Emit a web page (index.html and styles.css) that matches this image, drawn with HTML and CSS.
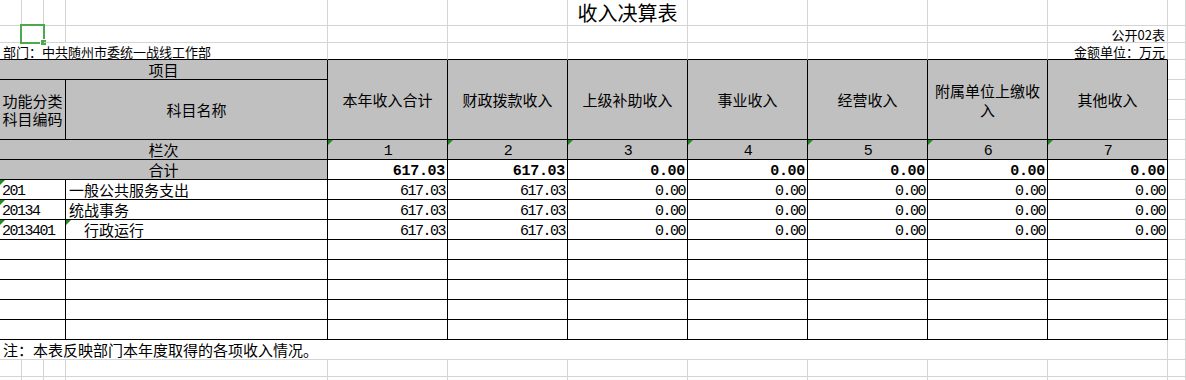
FILE: index.html
```html
<!DOCTYPE html>
<html lang="zh-CN">
<head>
<meta charset="utf-8">
<title>收入决算表</title>
<link rel="stylesheet" href="styles.css">
</head>
<body>
<div class="sheet">
  <!-- row 1 -->
  <div></div><div></div><div></div><div></div><div></div><div></div>
  <div class="title">收入决算表</div>
  <div></div><div></div><div></div><div></div><div></div>
  <!-- row 2 -->
  <div></div><div class="sel"></div><div></div><div></div><div></div><div></div><div></div><div></div><div></div><div></div>
  <div class="small right">公开02表</div>
  <div></div>
  <!-- row 3 -->
  <div class="small span4 bb">部门：中共随州市委统一战线工作部</div>
  <div class="bb"></div><div class="bb"></div><div class="bb"></div><div class="bb"></div><div class="bb"></div><div class="bb"></div>
  <div class="small right bb">金额单位：万元</div>
  <div></div>
  <!-- row 4 : header -->
  <div class="b h span4">项目</div>
  <div class="b h tall">本年收入合计</div>
  <div class="b h tall">财政拨款收入</div>
  <div class="b h tall">上级补助收入</div>
  <div class="b h tall">事业收入</div>
  <div class="b h tall">经营收入</div>
  <div class="b h tall">附属单位上缴收入</div>
  <div class="b h tall">其他收入</div>
  <div></div>
  <!-- rows 5-7 -->
  <div class="b h code-head">功能分类科目编码</div>
  <div class="b h name-head">科目名称</div>
  <div></div>
  <div></div>
  <div></div>
  <!-- row 8 : 栏次 -->
  <div class="b h span4">栏次</div>
  <div class="b h n tri">1</div>
  <div class="b h n tri">2</div>
  <div class="b h n tri">3</div>
  <div class="b h n tri">4</div>
  <div class="b h n tri">5</div>
  <div class="b h n tri">6</div>
  <div class="b h n tri">7</div>
  <div></div>
  <!-- row 9 : 合计 -->
  <div class="b h span4">合计</div>
  <div class="b n num strong">617.03</div>
  <div class="b n num strong">617.03</div>
  <div class="b n num strong">0.00</div>
  <div class="b n num strong">0.00</div>
  <div class="b n num strong">0.00</div>
  <div class="b n num strong">0.00</div>
  <div class="b n num strong">0.00</div>
  <div></div>
  <!-- row 10 -->
  <div class="b n code span3 tri">201</div>
  <div class="b name">一般公共服务支出</div>
  <div class="b n num">617.03</div>
  <div class="b n num">617.03</div>
  <div class="b n num">0.00</div>
  <div class="b n num">0.00</div>
  <div class="b n num">0.00</div>
  <div class="b n num">0.00</div>
  <div class="b n num">0.00</div>
  <div></div>
  <!-- row 11 -->
  <div class="b n code span3 tri">20134</div>
  <div class="b name">统战事务</div>
  <div class="b n num">617.03</div>
  <div class="b n num">617.03</div>
  <div class="b n num">0.00</div>
  <div class="b n num">0.00</div>
  <div class="b n num">0.00</div>
  <div class="b n num">0.00</div>
  <div class="b n num">0.00</div>
  <div></div>
  <!-- row 12 -->
  <div class="b n code span3 tri">2013401</div>
  <div class="b name indent tri">行政运行</div>
  <div class="b n num">617.03</div>
  <div class="b n num">617.03</div>
  <div class="b n num">0.00</div>
  <div class="b n num">0.00</div>
  <div class="b n num">0.00</div>
  <div class="b n num">0.00</div>
  <div class="b n num">0.00</div>
  <div></div>
  <!-- rows 13-17 : empty -->
  <div class="b span3"></div><div class="b"></div><div class="b"></div><div class="b"></div><div class="b"></div><div class="b"></div><div class="b"></div><div class="b"></div><div class="b"></div><div></div>
  <div class="b span3"></div><div class="b"></div><div class="b"></div><div class="b"></div><div class="b"></div><div class="b"></div><div class="b"></div><div class="b"></div><div class="b"></div><div></div>
  <div class="b span3"></div><div class="b"></div><div class="b"></div><div class="b"></div><div class="b"></div><div class="b"></div><div class="b"></div><div class="b"></div><div class="b"></div><div></div>
  <div class="b span3"></div><div class="b"></div><div class="b"></div><div class="b"></div><div class="b"></div><div class="b"></div><div class="b"></div><div class="b"></div><div class="b"></div><div></div>
  <div class="b span3"></div><div class="b"></div><div class="b"></div><div class="b"></div><div class="b"></div><div class="b"></div><div class="b"></div><div class="b"></div><div class="b"></div><div></div>
  <!-- row 18 : note -->
  <div class="note">注：本表反映部门本年度取得的各项收入情况。</div>
  <div></div>
  <!-- rows 19-20 -->
  <div></div><div></div><div></div><div></div><div></div><div></div><div></div><div></div><div></div><div></div><div></div><div></div>
  <div></div><div></div><div></div><div></div><div></div><div></div><div></div><div></div><div></div><div></div><div></div><div></div>
</div>
</body>
</html>
```

FILE: styles.css
```css
html, body {
  margin: 0;
  padding: 0;
  background: #ffffff;
  overflow: hidden;
}

body {
  font-family: "Noto Sans CJK SC", "Noto Sans", sans-serif;
  color: #000;
}

.sheet {
  width: 1186px;
  display: grid;
  grid-template-columns: 22px 22px 22px 262px repeat(7, 120px) minmax(0, 1fr);
  grid-template-rows: 26px 17px 17px repeat(15, 20px) 17px 17px;
}

.sheet > div {
  box-sizing: border-box;
  position: relative;
  border-right: 1px solid #d4d4d4;
  border-bottom: 1px solid #d4d4d4;
  display: flex;
  align-items: center;
  white-space: nowrap;
  font-size: 15px;
  line-height: 19px;
  padding: 0 3px;
  min-width: 0;
}

.sheet > .b {
  border-right-color: #000;
  border-bottom-color: #000;
}

.sheet > .bb {
  border-bottom-color: #000;
}

.span4 { grid-column: span 4; }
.span3 { grid-column: span 3; }
.tall { grid-row: span 4; }

.sheet > .title {
  font-size: 20px;
  line-height: 24px;
  justify-content: center;
  padding: 0;
}

.sheet > .small {
  font-size: 13px;
  line-height: 15px;
  padding: 1px 2px 0 3px;
}

.right { justify-content: flex-end; }

.sheet > .h {
  background: #c0c0c0;
  justify-content: center;
  text-align: center;
  white-space: normal;
  padding: 0 1px;
}

.sheet > .code-head {
  grid-column: span 3;
  grid-row: span 3;
  line-height: 18px;
  padding: 0 1px;
}

.sheet > .name-head {
  grid-row: span 3;
}

.sheet > .n {
  font-family: "Liberation Mono", monospace;
  letter-spacing: -1.5px;
  padding-top: 4px;
}

.sheet > .num {
  justify-content: flex-end;
  padding-right: 2px;
  padding-left: 0;
}

.sheet > .strong {
  font-weight: bold;
  letter-spacing: -0.3px;
  padding-right: 2px;
}

.sheet > .code {
  padding-left: 2px;
}

.sheet > .name {
  padding-left: 3px;
}

.sheet > .indent {
  padding-left: 18px;
}

.sheet > .note {
  grid-column: span 11;
  padding-left: 3px;
}

/* small green "number stored as text" markers */
.tri::before {
  content: "";
  position: absolute;
  top: 0;
  left: 0;
  width: 0;
  height: 0;
  border-top: 5px solid #1a8f1a;
  border-right: 5px solid transparent;
}

/* active cell selection frame */
.sel::before {
  content: "";
  position: absolute;
  left: -2px;
  top: -2px;
  width: 25px;
  height: 20px;
  box-sizing: border-box;
  border: 2px solid #4ca84c;
}

.sel::after {
  content: "";
  position: absolute;
  left: 19px;
  top: 14px;
  width: 5px;
  height: 5px;
  background: #4ca84c;
  box-shadow: 0 0 0 1px #ffffff;
}
```
